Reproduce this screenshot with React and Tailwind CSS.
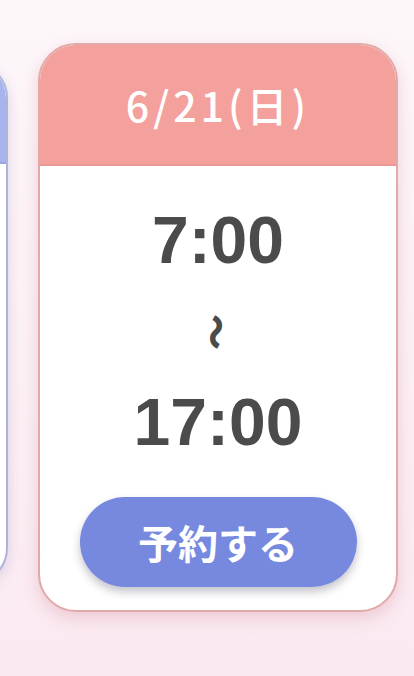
import React from "react";

export default function App() {
  return (
    <div
      className="relative w-[414px] h-[676px] overflow-hidden bg-gradient-to-b from-[#fdf7fa] via-[#fcf1f6] to-[#fbe9f1] flex items-start"
      style={{ fontFamily: '"Liberation Sans", "Noto Sans CJK JP", sans-serif' }}
    >
      {/* left partial card */}
      <div className="shrink-0 ml-[-332px] w-[340px] h-[522px] mt-[62px] rounded-[36px] border-2 border-[#aeb3dc] bg-white overflow-hidden flex flex-col shadow-[0_4px_14px_rgba(160,150,200,0.35)]">
        <div className="h-[100px] bg-[#a8b4ee] border-b-2 border-[#9aa6e0]" />
      </div>

      {/* main card */}
      <div className="shrink-0 ml-[30px] w-[360px] h-[569px] rounded-[38px] border-2 border-[#e2a9a9] bg-white overflow-hidden flex flex-col mt-[43px] shadow-[0_6px_16px_rgba(220,160,170,0.45)]">
        <div className="h-[121px] shrink-0 bg-[#f4a19d] border-b-2 border-[#eb9894] flex items-center justify-center">
          <span
            className="text-white text-[41px] font-medium tracking-[4px] leading-none"
            style={{ fontFamily: '"Noto Sans CJK JP", "Noto Sans", sans-serif' }}
          >
            6/21(日)
          </span>
        </div>
        <div className="flex-1 flex flex-col items-center">
          <div className="mt-[42px] h-[65px] text-[66px] leading-[65px] font-bold text-[#4b4b4b]">7:00</div>
          <div className="mt-[39px] h-[40px] w-[40px] flex items-center justify-center">
            <span
              className="block rotate-90 text-[36px] leading-none font-black text-[#4b4b4b]"
              style={{ fontFamily: '"Noto Sans CJK JP", sans-serif' }}
            >
              〜
            </span>
          </div>
          <div className="mt-[38px] h-[65px] text-[66px] leading-[65px] font-bold text-[#4b4b4b]">17:00</div>
          <button
            className="mt-[42px] w-[277px] h-[90px] rounded-full bg-[#7689df] text-white text-[40px] font-bold flex items-center justify-center shadow-[0_5px_8px_rgba(60,60,90,0.3)]"
            style={{ fontFamily: '"Noto Sans CJK JP", sans-serif' }}
          >
            予約する
          </button>
        </div>
      </div>
    </div>
  );
}
